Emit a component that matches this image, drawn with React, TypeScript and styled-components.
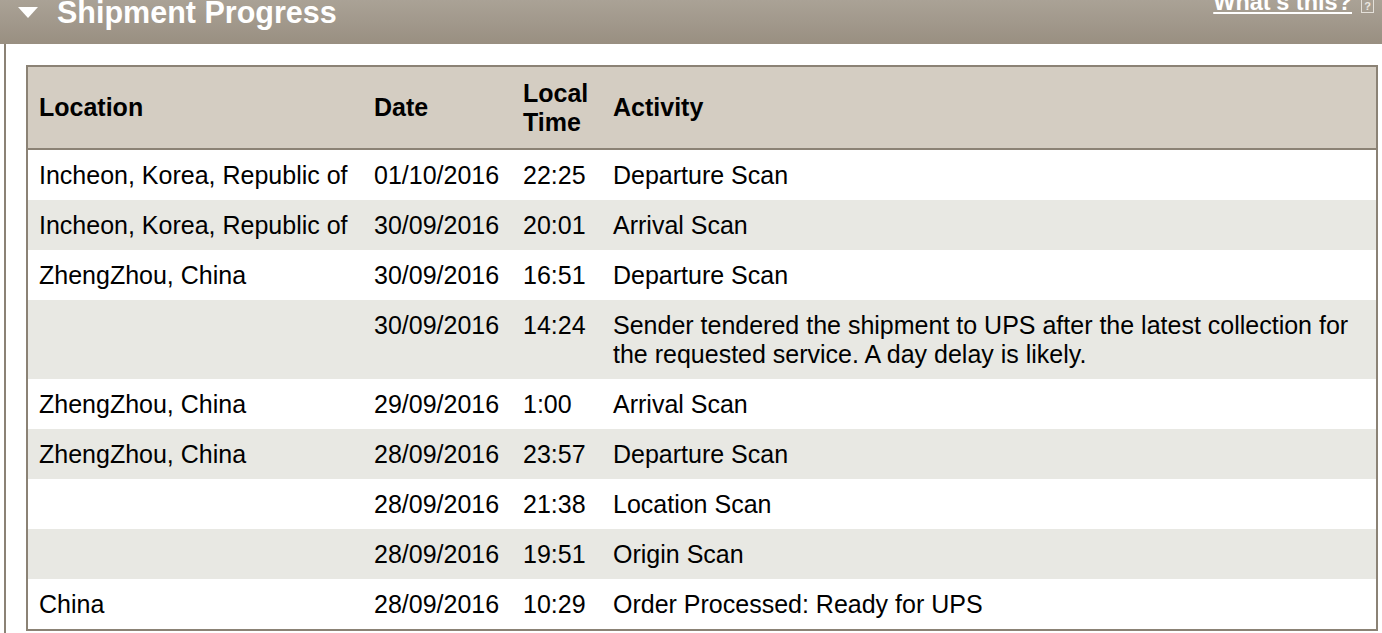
import React from "react";
import styled, { createGlobalStyle } from "styled-components";

const GlobalStyle = createGlobalStyle`
  html, body {
    margin: 0;
    padding: 0;
    background: #ffffff;
    overflow: hidden;
  }
  body {
    font-family: "Liberation Sans", Arial, Helvetica, sans-serif;
    color: #000;
  }
`;

const Page = styled.div`
  width: 1382px;
  height: 633px;
  overflow: hidden;
  background: #fff;
`;

const HeaderBar = styled.div`
  height: 44px;
  display: flex;
  align-items: flex-start;
  justify-content: space-between;
  background: linear-gradient(#aaa296, #998f81);
  color: #fff;
  overflow: hidden;
  padding: 0 8px 0 18px;
`;

const TitleGroup = styled.div`
  display: flex;
  align-items: flex-start;
`;

const Caret = styled.svg`
  width: 20px;
  height: 11px;
  margin-top: 7px;
  margin-right: 19px;
  flex: none;
`;

const Title = styled.h2`
  margin: -3px 0 0 0;
  font-size: 30.5px;
  line-height: 30px;
  font-weight: 700;
  color: #fff;
`;

const HelpGroup = styled.div`
  display: flex;
  align-items: flex-start;
  gap: 9px;
`;

const HelpLink = styled.a`
  display: block;
  margin-top: -12px;
  font-size: 23.5px;
  line-height: 29px;
  font-weight: 700;
  color: #fff;
  text-decoration: underline;
  text-decoration-thickness: 2px;
  text-underline-offset: 2px;
  cursor: pointer;
`;

const HelpIcon = styled.span`
  display: flex;
  align-items: center;
  justify-content: center;
  box-sizing: border-box;
  width: 13px;
  height: 16px;
  margin-top: -3px;
  border: 1.5px solid #e4e0d9;
  color: #ebe7e1;
  font-size: 11px;
  line-height: 11px;
  font-weight: 700;
  padding-top: 2px;
`;

const Panel = styled.div`
  margin-left: 4px;
  border-left: 2px solid #8b8275;
  padding: 21px 4px 0 20px;
  height: 600px;
`;

const Table = styled.table`
  width: 100%;
  table-layout: fixed;
  border-collapse: separate;
  border-spacing: 0;
  border: 2px solid #8b8275;
  font-size: 25px;
  line-height: 29px;
`;

const HeadCell = styled.th<{ $w?: number }>`
  box-sizing: border-box;
  ${(p) => (p.$w ? `width: ${p.$w}px;` : "")}
  background: #d4cdc2;
  text-align: left;
  vertical-align: middle;
  font-weight: 700;
  padding: 11.5px 4px 11.5px 11px;
  border-bottom: 2px solid #8b8275;
  color: #000;
`;

const Row = styled.tr`
  background: #fff;
  &:nth-child(even) {
    background: #e8e8e3;
  }
`;

const Cell = styled.td`
  box-sizing: border-box;
  vertical-align: top;
  padding: 10.5px 4px 10.5px 11px;
  color: #000;
  white-space: normal;
`;

const rows = [
  ["Incheon, Korea, Republic of", "01/10/2016", "22:25", "Departure Scan"],
  ["Incheon, Korea, Republic of", "30/09/2016", "20:01", "Arrival Scan"],
  ["ZhengZhou, China", "30/09/2016", "16:51", "Departure Scan"],
  [
    "",
    "30/09/2016",
    "14:24",
    "Sender tendered the shipment to UPS after the latest collection for the requested service. A day delay is likely.",
  ],
  ["ZhengZhou, China", "29/09/2016", "1:00", "Arrival Scan"],
  ["ZhengZhou, China", "28/09/2016", "23:57", "Departure Scan"],
  ["", "28/09/2016", "21:38", "Location Scan"],
  ["", "28/09/2016", "19:51", "Origin Scan"],
  ["China", "28/09/2016", "10:29", "Order Processed: Ready for UPS"],
];

export default function App() {
  return (
    <Page>
      <GlobalStyle />
      <HeaderBar>
        <TitleGroup>
          <Caret viewBox="0 0 20 11">
            <polygon points="0,0 20,0 10,11" fill="#fff" />
          </Caret>
          <Title>Shipment Progress</Title>
        </TitleGroup>
        <HelpGroup>
          <HelpLink>What's this?</HelpLink>
          <HelpIcon>?</HelpIcon>
        </HelpGroup>
      </HeaderBar>
      <Panel>
        <Table>
          <thead>
            <tr>
              <HeadCell $w={335}>Location</HeadCell>
              <HeadCell $w={149}>Date</HeadCell>
              <HeadCell $w={90}>Local Time</HeadCell>
              <HeadCell>Activity</HeadCell>
            </tr>
          </thead>
          <tbody>
            {rows.map((r, i) => (
              <Row key={i}>
                {r.map((c, j) => (
                  <Cell key={j}>{c}</Cell>
                ))}
              </Row>
            ))}
          </tbody>
        </Table>
      </Panel>
    </Page>
  );
}
